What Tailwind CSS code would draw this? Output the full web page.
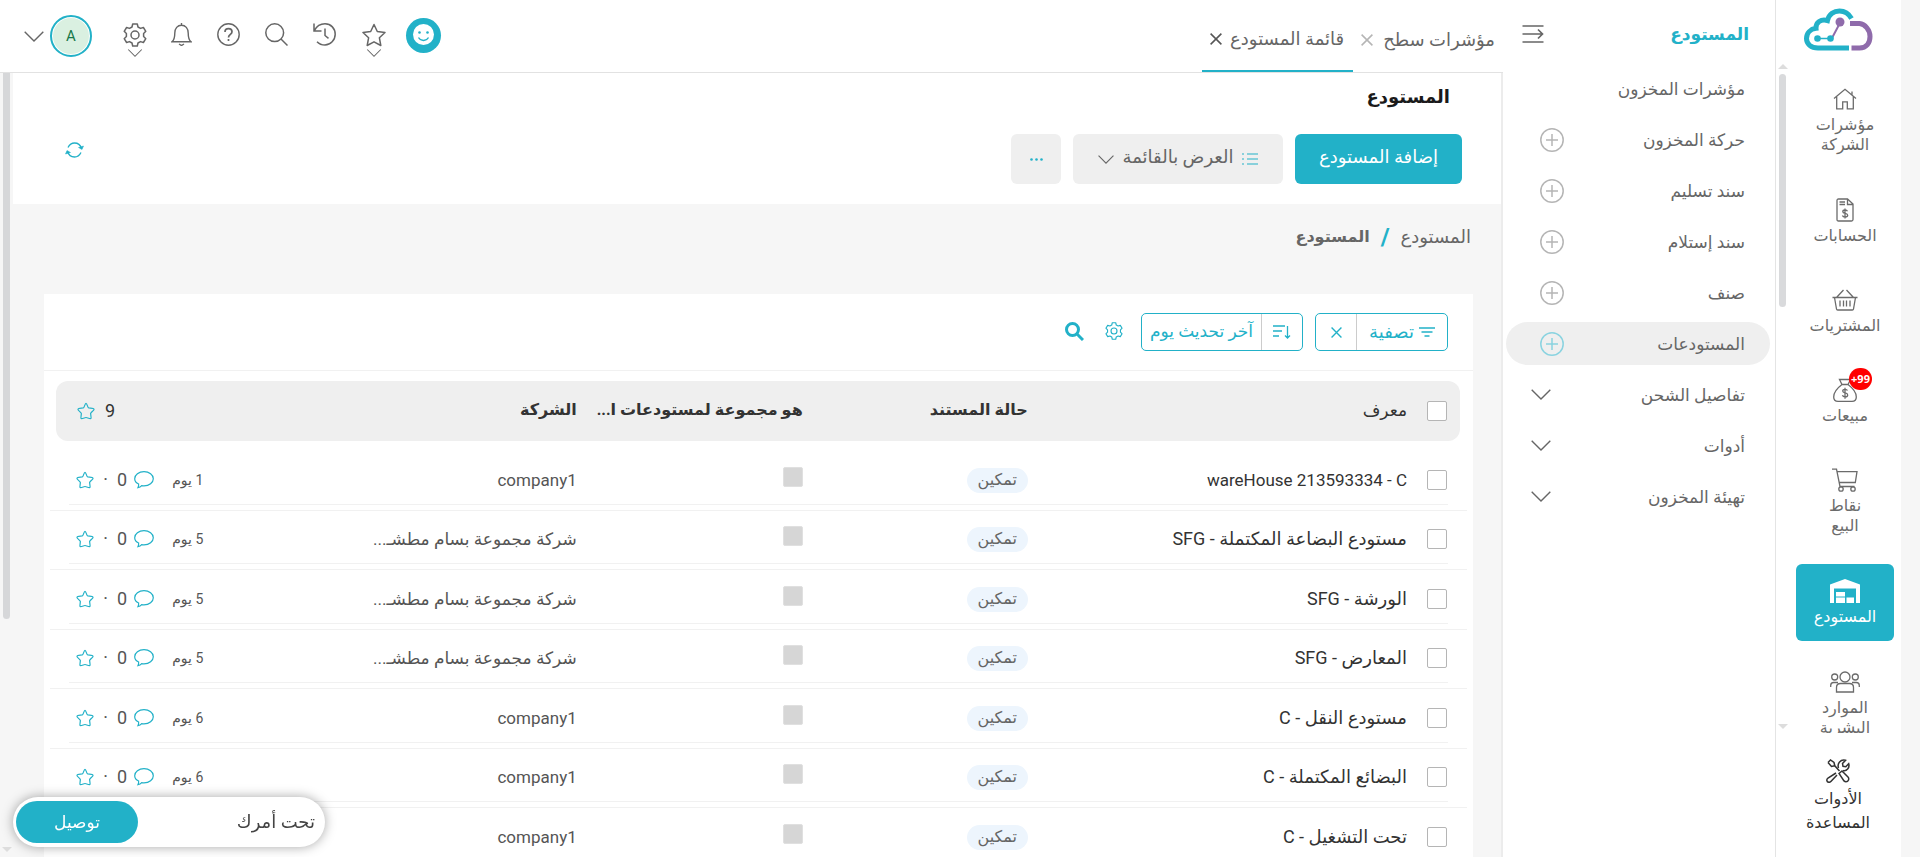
<!DOCTYPE html>
<html lang="ar" dir="rtl">
<head>
<meta charset="utf-8">
<title>المستودع</title>
<script src="https://cdn.jsdelivr.net/npm/@tailwindcss/browser@4"></script>
</head>
<body class="h-screen overflow-hidden bg-[#f6f6f6] pr-[19px] font-['Roboto','DejaVu_Sans',sans-serif] text-base text-[#666]">
<svg class="hidden">
  <defs>
    <symbol id="chev" viewBox="0 0 20 11"><path d="M.7.7 10 10 19.3.7" fill="none" stroke="currentColor" stroke-width="1.4"/></symbol>
    <symbol id="plus" viewBox="0 0 24 24"><g fill="none" stroke="currentColor" stroke-width="1.5"><circle cx="12" cy="12" r="11.2"/><path d="M12 6v12M6 12h12"/></g></symbol>
    <symbol id="x" viewBox="0 0 12 12"><path d="m.6.6 10.800 10.800M11.400.6.6 11.400" fill="none" stroke="currentColor" stroke-width="1.5"/></symbol>
    <symbol id="star" viewBox="0 0 24 24"><path d="m12 1.500 3.300 7 7.700 1-5.600 5.300 1.400 7.700L12 18.800l-6.800 3.700 1.400-7.700L1 9.500l7.700-1z" fill="none" stroke="currentColor" stroke-width="1.500" stroke-linejoin="round"/></symbol>
    <symbol id="softstar" viewBox="0 0 18 18"><path d="M9 1.300c1 0 1.700 4.100 2.400 4.500.7.500 5.300.4 5.700 1.400.3.900-3.200 3.200-3.400 4.100-.3.900.9 4.600.2 5.200-.8.500-4-1-4.900-1s-4.100 1.500-4.900 1c-.7-.6.500-4.300.2-5.200C4 10.400.6 8.100.9 7.200c.4-1 5-.9 5.700-1.400C7.300 5.400 8 1.300 9 1.300z" fill="none" stroke="currentColor" stroke-width="1.200"/></symbol>
    <symbol id="chat" viewBox="0 0 20 18"><path d="M4.600 13C2.200 11.900.7 10 .7 7.700.7 3.900 4.800.7 10 .7s9.300 3.200 9.300 7-4.100 7.200-9.300 7.200c-.8 0-1.600-.1-2.300-.2-1 1.300-2.400 1.900-3.800 2 .6-1 .9-2.300.7-3.700z" fill="none" stroke="currentColor" stroke-width="1.200"/></symbol>
    <symbol id="gear" viewBox="0 0 24 24"><g fill="none" stroke="currentColor" stroke-width="1.500"><circle cx="12" cy="12" r="4"/><path d="M9.700 1h4.600l.7 3 2.500 1.400 2.900-.9L22.800 8.300l-2.200 2.200v3l2.200 2.200-2.400 3.800-2.900-.9L15 20l-.7 3H9.700L9 20l-2.500-1.400-2.900.9-2.400-3.800 2.200-2.200v-3L1.200 8.300l2.400-3.800 2.900.9L9 4z" stroke-linejoin="round"/></g></symbol>
  </defs>
</svg>

<div class="flex h-full">
  <!-- module rail -->
  <aside class="flex h-full w-[126px] shrink-0 flex-col border-l border-[#e4e4e4] bg-white text-center text-[16px] leading-5 text-[#6b6b6b]">
    <a href="#" aria-label="الرئيسية" class="flex h-[64px] shrink-0 justify-center pt-2">
      <svg class="h-11 w-[69px]" viewBox="0 0 69 44" fill="none">
        <path d="M45 40H14C7 40 2.500 36 2.500 30.500 2.500 25 6.500 21 12 20.300 11.500 14.500 17 10.500 23.500 12.500 25 6 30 3 35.500 3 41 3 45 6 47.500 10.500" stroke="#22b1c8" stroke-width="5"/>
        <path d="M47.500 40h8c7 0 10.500-5 10.500-11.500S61 16 55.500 15.500H46" stroke="#8f6bab" stroke-width="5"/>
        <path d="M28 30 36.500 14" stroke="#8f6bab" stroke-width="2"/><path d="M13 30.500h14" stroke="#22b1c8" stroke-width="1.500"/>
        <circle cx="36" cy="14" r="4.500" fill="#8f6bab"/><circle cx="13.500" cy="30.500" r="3.300" fill="#22b1c8"/><circle cx="26.500" cy="30.500" r="3.300" fill="#22b1c8"/>
      </svg>
    </a>
    <div class="relative h-[669px] shrink-0 overflow-hidden">
      <div class="absolute top-0 left-0 flex h-full w-[13px] flex-col items-center">
        <div class="h-0 w-0 border-x-[5px] border-b-[5px] border-x-transparent border-b-[#ddd]"></div>
        <div class="mt-[5px] h-[233px] w-[7px] rounded-full bg-[#d9dadc]"></div>
        <div class="mt-auto mb-1 h-0 w-0 border-x-[5px] border-t-[5px] border-x-transparent border-t-[#ddd]"></div>
      </div>
      <nav class="flex flex-col gap-[13px] pt-[10px] pr-[7px] pl-5">
        <a href="#" class="flex h-[97px] w-[98px] flex-col items-center pt-[14px]">
          <svg class="h-[22px] w-6" viewBox="0 0 24 22" fill="none" stroke="currentColor" stroke-width="1.300"><path d="M1 10.500 12 1.300l11 9.200M3.700 8.500v12.300h6v-7h4.600v7h6V8.500M19 7V3.500"/></svg>
          <span class="mt-[5px]">مؤشرات<br>الشركة</span></a>
        <a href="#" class="flex h-[77px] w-[98px] flex-col items-center pt-[14px]">
          <svg class="h-6 w-[18px]" viewBox="0 0 18 24" fill="none" stroke="currentColor" stroke-width="1.300"><path d="M2.500 1h9l5.500 5v15.500c0 1-.5 1.500-1.500 1.500h-13C1.500 23 1 22.500 1 21.500v-19C1 1.500 1.500 1 2.500 1zM11.500 1v5.500H17M3.500 4h5.500M3.500 6.500h5.500"/><path d="M11.500 13.200c-.4-.8-1.300-1.200-2.400-1.200-1.400 0-2.300.7-2.300 1.700 0 2.400 4.900 1.100 4.900 3.600 0 1.100-1.100 1.800-2.600 1.800-1.300 0-2.300-.5-2.700-1.500M9 10.500v10"/></svg>
          <span class="mt-1">الحسابات</span></a>
        <a href="#" class="flex h-[77px] w-[98px] flex-col items-center pt-[15px]">
          <svg class="h-[22px] w-[26px]" viewBox="0 0 26 22" fill="none" stroke="currentColor" stroke-width="1.300"><path d="M.5 8.500h25M2.500 8.500l2 11.500c.1.700.5 1 1.200 1h14.600c.7 0 1.100-.3 1.200-1l2-11.500M4.500 8.500l7-7.500M21.500 8.500l-7-7.500M8 11.500v6M11.500 11.500v6M14.500 11.500v6M18 11.500v6"/></svg>
          <span class="mt-[5px]">المشتريات</span></a>
        <a href="#" class="relative flex h-[77px] w-[98px] flex-col items-center pt-[14px]">
          <svg class="h-6 w-6" viewBox="0 0 24 24" fill="none" stroke="currentColor" stroke-width="1.300"><path d="M6.500 1.500h11L15 6.500H9zM9 6.500c-4 3-8.300 8-8.300 12.500 0 3 1.500 4.300 4.300 4.300h14c2.800 0 4.300-1.300 4.300-4.300 0-4.500-4.300-9.500-8.300-12.500"/><path d="M14.500 12.500c-.4-.8-1.300-1.200-2.400-1.200-1.400 0-2.400.7-2.400 1.800 0 2.500 5 1.200 5 3.800 0 1.200-1.100 1.900-2.600 1.900-1.300 0-2.300-.5-2.700-1.500M12 9.700v11"/></svg>
          <span dir="ltr" class="absolute top-1 right-[22px] h-[22px] w-[23px] rounded-full bg-[#f00] font-['Open_Sans'] text-[11px] leading-[22px] font-bold text-white">+99</span>
          <span class="mt-1">مبيعات</span></a>
        <a href="#" class="flex h-[97px] w-[98px] flex-col items-center pt-[14px]">
          <svg class="h-6 w-[26px]" viewBox="0 0 26 24" fill="none" stroke="currentColor" stroke-width="1.300"><path d="M0 1.200h4.500L8 18.500h14.500M5.300 3.700H25l-1.700 10.800H7.300"/><circle cx="9" cy="21" r="2.200"/><circle cx="21" cy="21" r="2.200"/></svg>
          <span class="mt-1">نقاط<br>البيع</span></a>
        <a href="#" aria-current="page" class="flex h-[77px] w-[98px] flex-col items-center rounded-md bg-[#22b1c8] pt-[15px] text-white">
          <svg class="h-6 w-[30px]" viewBox="0 0 30 24" fill="currentColor"><path d="M0 24V5.500L15 0l15 5.500V24h-4V9.500H4V24zM6 13h9v4.500H6zM6 18.500h9V24H6zM16.500 18.500H24V24h-7.500z"/></svg>
          <span class="mt-1">المستودع</span></a>
        <a href="#" class="flex h-[97px] w-[98px] flex-col items-center pt-[17px]">
          <svg class="h-[22px] w-[30px]" viewBox="0 0 30 22" fill="none" stroke="currentColor" stroke-width="1.300"><circle cx="15" cy="6" r="5"/><circle cx="4.700" cy="6" r="3"/><circle cx="25.300" cy="6" r="3"/><path d="M6.500 21v-4.500c0-2.500 1.500-4 4-4h9c2.500 0 4 1.500 4 4V21zM.7 16v-1.500c0-2 1-3 3-3H8M29.300 16v-1.500c0-2-1-3-3-3H22"/></svg>
          <span class="mt-[5px]">الموارد<br>البشرية</span></a>
      </nav>
    </div>
    <a href="#" class="flex flex-col items-center pt-[26px] pr-[2px] pl-[1px] text-[#333]">
      <svg class="h-6 w-6" viewBox="0 0 24 24" fill="none" stroke="currentColor" stroke-width="1.500"><path d="M2 3.500 4.500 1l3.500 2.500.8 3.300 4.700 5.200M8.800 6.800 5.500 7.500 2 3.500"/><path d="M13 14.500 16 12l6 6c1.500 1.500.5 4.700-2 4.700-.8 0-1.500-.3-2-.8z"/><path d="M10 14 2 19c-2 1.500-1.300 4.300 1.200 4.300.8 0 1.400-.4 1.900-1L11 16M12.500 9C11 4.500 14.500 0 19.500 1.300L16.500 4.500l.5 2.800 2.800.5L22.700 4.700C24 9 20.500 12.500 17 11.500"/></svg>
      <span class="mt-1 leading-6">الأدوات<br>المساعدة</span>
    </a>
  </aside>

  <!-- warehouse menu -->
  <aside class="flex h-full w-[272px] shrink-0 flex-col bg-white">
    <div class="flex h-[67px] shrink-0 items-center justify-between pr-[26px] pl-[19px]">
      <h2 class="text-[17px] leading-6 font-bold text-[#22b1c8]">المستودع</h2>
      <button type="button" aria-label="طي القائمة"><svg class="h-[18px] w-[22px]" viewBox="0 0 22 18" fill="none" stroke="#666" stroke-width="1.700"><path d="M.5 1h21M.5 9h20M.5 17h21M16 4.500 20.500 9 16 13.500"/></svg></button>
    </div>
    <nav class="flex flex-col gap-2 pr-[5px] pl-[3px] text-[17px] leading-6">
      <a href="#" class="flex h-[43px] items-center justify-between pr-[25px] pl-[34px]">مؤشرات المخزون</a>
      <a href="#" class="flex h-[43px] items-center justify-between pr-[25px] pl-[34px]">حركة المخزون<svg class="h-6 w-6 text-[#b5b5b5]"><use href="#plus"/></svg></a>
      <a href="#" class="flex h-[43px] items-center justify-between pr-[25px] pl-[34px]">سند تسليم<svg class="h-6 w-6 text-[#b5b5b5]"><use href="#plus"/></svg></a>
      <a href="#" class="flex h-[43px] items-center justify-between pr-[25px] pl-[34px]">سند إستلام<svg class="h-6 w-6 text-[#b5b5b5]"><use href="#plus"/></svg></a>
      <a href="#" class="flex h-[43px] items-center justify-between pr-[25px] pl-[34px]">صنف<svg class="h-6 w-6 text-[#b5b5b5]"><use href="#plus"/></svg></a>
      <a href="#" aria-current="page" class="flex h-[43px] items-center justify-between rounded-full bg-[#efefef] pr-[25px] pl-[34px]">المستودعات<svg class="h-6 w-6 text-[#8ad3e0]"><use href="#plus"/></svg></a>
      <button type="button" class="flex h-[43px] items-center justify-between pr-[25px] pl-[25px]">تفاصيل الشحن<svg class="h-[11px] w-5"><use href="#chev"/></svg></button>
      <button type="button" class="flex h-[43px] items-center justify-between pr-[25px] pl-[25px]">أدوات<svg class="h-[11px] w-5"><use href="#chev"/></svg></button>
      <button type="button" class="flex h-[43px] items-center justify-between pr-[25px] pl-[25px]">تهيئة المخزون<svg class="h-[11px] w-5"><use href="#chev"/></svg></button>
    </nav>
  </aside>

  <div class="flex min-w-0 flex-1 flex-col">
    <header class="flex h-[73px] shrink-0 items-stretch justify-between border-b border-[#e2e2e2] bg-white pl-[24px]">
      <div class="flex text-lg leading-6">
        <div class="flex items-center gap-[10px] pt-2 pr-2 pl-2"><a href="#">مؤشرات سطح</a><button type="button" aria-label="إغلاق" class="text-[#b5b5b5]"><svg class="h-3 w-3"><use href="#x"/></svg></button></div>
        <div class="flex items-center gap-2 border-b-2 border-[#22b1c8] pt-2 pr-[9px] pl-2"><a href="#">قائمة المستودع</a><button type="button" aria-label="إغلاق" class="text-[#555]"><svg class="h-3 w-3"><use href="#x"/></svg></button></div>
      </div>
      <div class="flex items-start">
        <button type="button" aria-label="مساعد" class="mt-[18px] h-[35px] w-[35px] rounded-full bg-[#22b1c8] p-[6px]"><svg class="h-[23px] w-[23px]" viewBox="0 0 23 23"><circle cx="11.500" cy="10.500" r="10.500" fill="#fff"/><g fill="#22b1c8"><circle cx="7.500" cy="8.500" r="1.300"/><circle cx="15.500" cy="8.500" r="1.300"/></g><path d="M6.500 13.500c2.500 4 7.500 4 10 0" fill="none" stroke="#22b1c8" stroke-width="1.300"/></svg></button>
        <button type="button" aria-label="المفضلة" class="mt-[23px] mr-5 flex flex-col items-center gap-[2px]"><svg class="h-6 w-6"><use href="#star"/></svg><svg class="h-2 w-4"><use href="#chev"/></svg></button>
        <button type="button" aria-label="السجل" class="mt-[23px] mr-[26px]"><svg class="h-[23px] w-[23px]" viewBox="0 0 23 23" fill="none" stroke="currentColor" stroke-width="1.500"><path d="M1 .5v7.500h7.500M1.300 7.700C4 2.500 8 .8 12 .8c6 0 10.200 4.700 10.200 10.500S17.500 22 12 22c-3.200 0-6-1.200-8-3.300M12 5.500v7l3.500 2.800"/></svg></button>
        <button type="button" aria-label="بحث" class="mt-[23px] mr-[25px]"><svg class="h-[23px] w-[23px]" viewBox="0 0 23 23" fill="none" stroke="currentColor" stroke-width="1.500"><circle cx="9.700" cy="9.700" r="8.900"/><path d="m16 16 6.500 6.500"/></svg></button>
        <button type="button" aria-label="مساعدة" class="mt-[23px] mr-[25px]"><svg class="h-[23px] w-[23px]" viewBox="0 0 23 23" fill="none" stroke="currentColor" stroke-width="1.400"><circle cx="11.500" cy="11.500" r="10.700"/><path d="M8 9c0-2 1.500-3.300 3.500-3.300S15 7 15 8.700c0 2.600-3.500 2.700-3.500 5.800M11.500 16v2" stroke-width="1.700"/></svg></button>
        <button type="button" aria-label="الإشعارات" class="mt-[23px] mr-[25px]"><svg class="h-[23px] w-[21px]" viewBox="0 0 21 23" fill="none" stroke="currentColor" stroke-width="1.400"><path d="M10.500 0v2M1 18.700c2.500-2 2.800-5 2.800-8.700 0-4.500 2.700-7.800 6.700-7.800s6.700 3.300 6.700 7.800c0 3.700.3 6.700 2.800 8.700zM8 21l2.500 1.500L13 21"/></svg></button>
        <button type="button" aria-label="الإعدادات" class="mt-[23px] mr-6 flex flex-col items-center gap-[2px]"><svg class="h-6 w-6"><use href="#gear"/></svg><svg class="h-2 w-4"><use href="#chev"/></svg></button>
        <button type="button" aria-label="الحساب" class="mt-[15px] mr-[31px] flex items-center gap-[6px]"><span class="flex h-[42px] w-[42px] items-center justify-center rounded-full border-2 border-[#22b1c8] bg-[#daf0e1] text-[15px] text-[#19784a] ring-1 ring-white ring-inset">A</span><svg class="h-[11px] w-5"><use href="#chev"/></svg></button>
      </div>
    </header>

    <div class="flex min-h-0 flex-1">
      <main class="min-w-0 flex-1 overflow-hidden border-r-2 border-[#ececec]">
        <section class="h-[131px] bg-white pt-3 pr-[39px] pl-[52px]">
          <h1 class="pr-[12px] text-lg leading-6 font-bold text-[#1a1a1a]">المستودع</h1>
          <div class="mt-[25px] flex gap-3 text-lg">
            <button type="button" class="h-[50px] w-[167px] rounded-md bg-[#22b1c8] pb-1 text-white">إضافة المستودع</button>
            <button type="button" class="flex h-[50px] w-[210px] items-center justify-center gap-[9px] rounded-md bg-[#efefef]">
              <svg class="h-3 w-4 text-[#22b1c8]" viewBox="0 0 16 12" stroke="currentColor" stroke-width="1.200"><path d="M5 1h11M5 6h11M5 11h11M0 1h2M0 6h2M0 11h2"/></svg><span class="pb-1">العرض بالقائمة</span><svg class="h-[9px] w-4"><use href="#chev"/></svg></button>
            <button type="button" aria-label="المزيد" class="flex h-[50px] w-[50px] items-center justify-center rounded-md bg-[#efefef]"><svg class="h-[3px] w-[13px]" viewBox="0 0 13 3" fill="#22b1c8"><circle cx="1.500" cy="1.500" r="1.300"/><circle cx="6.500" cy="1.500" r="1.300"/><circle cx="11.500" cy="1.500" r="1.300"/></svg></button>
            <button type="button" aria-label="تحديث" class="mr-auto h-8 text-[#22b1c8]"><svg class="h-4 w-[19px]" viewBox="0 0 19 16" fill="none" stroke="currentColor" stroke-width="1.300"><path d="M3 5.500C4.500 2.500 6.800 1 9.500 1c3.300 0 6 2.200 7 5.500M16 10.500C14.500 13.500 12.200 15 9.500 15c-3.300 0-6-2.200-7-5.500"/><path d="m13.500 5.500 3.500 2L18.500 4zM5.500 10.500l-3.500-2L.5 12z" fill="currentColor" stroke-width=".5"/></svg></button>
          </div>
        </section>

        <nav aria-label="مسار التنقل" class="flex h-[90px] items-start gap-[11px] pt-[21px] pr-[30px] leading-6">
          <a href="#" class="text-lg leading-6">المستودع</a><span class="text-2xl leading-6 font-bold text-[#22b1c8]">/</span><a href="#" class="font-bold">المستودع</a>
        </nav>

        <section class="mr-[28px] ml-[31px] bg-white">
          <div class="flex h-[77px] items-start gap-3 border-b border-[#f1f1f1] pt-[19px] pr-[25px] text-[#22b1c8]">
            <div class="flex h-[38px] items-stretch divide-x divide-[#ccc] rounded-[5px] border border-[#22b1c8] text-lg">
              <button type="button" class="flex w-[91px] items-center justify-center gap-[5px]"><svg class="h-[10px] w-4" viewBox="0 0 16 10" stroke="currentColor" stroke-width="1.300"><path d="M0 1h16M2.500 5h11M5.500 9h5"/></svg>تصفية</button>
              <button type="button" aria-label="مسح التصفية" class="flex w-[40px] items-center justify-center"><svg class="h-[11px] w-[11px]"><use href="#x"/></svg></button>
            </div>
            <div class="flex h-[38px] items-stretch divide-x divide-[#ccc] rounded-[5px] border border-[#22b1c8] text-[17px]">
              <button type="button" aria-label="اتجاه الترتيب" class="flex w-[41px] items-center justify-center"><svg class="h-[14px] w-[18px]" viewBox="0 0 18 14" fill="none" stroke="currentColor" stroke-width="1.300"><path d="M0 1h12M0 6h9M0 11h6M14.500 1v12M12 10.500l2.500 2.500 2.500-2.500"/></svg></button>
              <button type="button" class="w-[119px] whitespace-nowrap">آخر تحديث يوم</button>
            </div>
            <button type="button" aria-label="إعدادات القائمة" class="mt-[9px] mr-[6px]"><svg class="h-[18px] w-[18px]"><use href="#gear"/></svg></button>
            <button type="button" aria-label="بحث في القائمة" class="mt-[9px] mr-[9px]"><svg class="h-[19px] w-[19px]" viewBox="0 0 19 19" fill="none" stroke="currentColor" stroke-width="3"><circle cx="7.500" cy="7.500" r="6"/><path d="m12 12 6 6"/></svg></button>
          </div>

          <div class="px-[6px] pt-[10px]">
            <table class="w-full table-fixed border-separate border-spacing-0 text-right leading-6">
              <colgroup><col class="w-[31%]"><col class="w-[225px]"><col class="w-[226px]"><col class="w-[226px]"><col></colgroup>
              <thead class="text-base text-[#333]">
                <tr>
                  <th class="p-0 pr-[7px] pb-[10px] font-normal"><div class="flex h-[60px] items-center gap-5 rounded-r-xl bg-[#efefef] pr-[13px] text-[17px]"><input type="checkbox" aria-label="تحديد الكل" class="h-5 w-5 appearance-none rounded-[2px] border border-[#b5b5b5] bg-white">معرف</div></th>
                  <th class="p-0 pb-[10px]"><div class="h-[60px] bg-[#efefef] leading-[58px]">حالة المستند</div></th>
                  <th class="p-0 pb-[10px]"><div class="h-[60px] bg-[#efefef] leading-[58px] whitespace-nowrap">هو مجموعة لمستودعات ا...</div></th>
                  <th class="p-0 pb-[10px]"><div class="h-[60px] bg-[#efefef] leading-[58px]">الشركة</div></th>
                  <th class="p-0 pb-[10px] pl-[6px] font-normal"><div class="flex h-[60px] items-center justify-end gap-[10px] rounded-l-xl bg-[#efefef] pl-[21px] text-lg"><span>9</span><svg class="h-[18px] w-[18px] text-[#22b1c8]"><use href="#softstar"/></svg></div></th>
                </tr>
              </thead>
              <tbody id="rows"></tbody>
            </table>
          </div>
        </section>
      </main>
      <!-- page scrollbar -->
      <div class="flex w-[13px] shrink-0 flex-col items-center">
        <div class="h-[546px] w-[7px] rounded-b-full bg-[#d6d7d9]"></div>
        <div class="mt-auto mb-[5px] h-0 w-0 border-x-[5px] border-t-[5px] border-x-transparent border-t-[#ddd]"></div>
      </div>
    </div>
  </div>
</div>

<div class="fixed bottom-[10px] left-[13px] flex h-[50px] w-[312px] items-center justify-between rounded-full bg-white pr-[10px] pl-[3px] text-lg text-[#444] shadow-[0_0_12px_rgba(0,0,0,0.35)]">
  <span>تحت أمرك</span>
  <button type="button" class="h-[42px] w-[122px] rounded-full bg-[#22b1c8] text-[17px] text-white">توصيل</button>
</div>

<template id="row">
  <tr class="h-[60px] even:h-[59px]">
    <td class="border-b border-[#f1f1f1] p-0 pr-[19px] pb-[5px] align-bottom"><div class="flex h-[53px] items-center gap-5 border-b border-[#f1f1f1] pt-1 pr-px text-[#333]"><input type="checkbox" class="h-5 w-5 shrink-0 appearance-none rounded-[2px] border border-[#b5b5b5] bg-white"><a href="#" class="text-lg lang-en:text-[17px] [&:lang(en)]:text-[17px]" data-f="name"></a></div></td>
    <td class="border-b border-[#f1f1f1] p-0 pb-[5px] align-bottom"><div class="flex h-[53px] items-center border-b border-[#f1f1f1] pt-1"><span class="flex h-[25px] w-[61px] items-center justify-center rounded-full bg-[#edf5fd] text-base">تمكين</span></div></td>
    <td class="border-b border-[#f1f1f1] p-0 pb-[5px] align-bottom"><div class="flex h-[53px] items-center border-b border-[#f1f1f1] pb-[2px]"><input type="checkbox" disabled class="h-5 w-5 appearance-none rounded-[2px] border border-[#e0e0e0] bg-[#d6d6d6]"></div></td>
    <td class="border-b border-[#f1f1f1] p-0 pb-[5px] align-bottom"><div class="h-[53px] border-b border-[#f1f1f1] pt-1 text-[17px] leading-[48px] whitespace-nowrap text-[#555]" data-f="company"></div></td>
    <td class="border-b border-[#f1f1f1] p-0 pb-[5px] pl-[19px] align-bottom"><div class="flex h-[53px] items-center justify-end border-b border-[#f1f1f1] pt-1 pl-[7px] text-[#555]"><span class="text-sm" data-f="age"></span><svg class="mr-[18px] h-[18px] w-5 text-[#22b1c8]"><use href="#chat"/></svg><span class="mr-[7px] text-lg">0</span><span class="mr-[9px] w-[5px] text-center text-lg">·</span><svg class="mr-[9px] h-[18px] w-[18px] text-[#22b1c8]"><use href="#softstar"/></svg></div></td>
  </tr>
</template>
<script>
  const group = 'شركة مجموعة بسام مطشـ...';
  const data = [
    ['wareHouse 213593334 - C', 'company1', '1 يوم'],
    ['مستودع البضاعة المكتملة - SFG', group, '5 يوم'],
    ['الورشة - SFG', group, '5 يوم'],
    ['المعارض - SFG', group, '5 يوم'],
    ['مستودع النقل - C', 'company1', '6 يوم'],
    ['البضائع المكتملة - C', 'company1', '6 يوم'],
    ['تحت التشغيل - C', 'company1', '6 يوم'],
  ];
  const body = document.getElementById('rows'), tpl = document.getElementById('row');
  for (const [name, company, age] of data) {
    const r = tpl.content.cloneNode(true);
    const link = r.querySelector('[data-f=name]');
    link.textContent = name;
    if (/^[a-z]/i.test(name)) link.lang = 'en';
    r.querySelector('[data-f=company]').textContent = company;
    r.querySelector('[data-f=age]').textContent = age;
    r.querySelector('input').setAttribute('aria-label', name);
    r.querySelector('input[disabled]').setAttribute('aria-label', 'هو مجموعة');
    body.append(r);
  }
</script>
</body>
</html>
